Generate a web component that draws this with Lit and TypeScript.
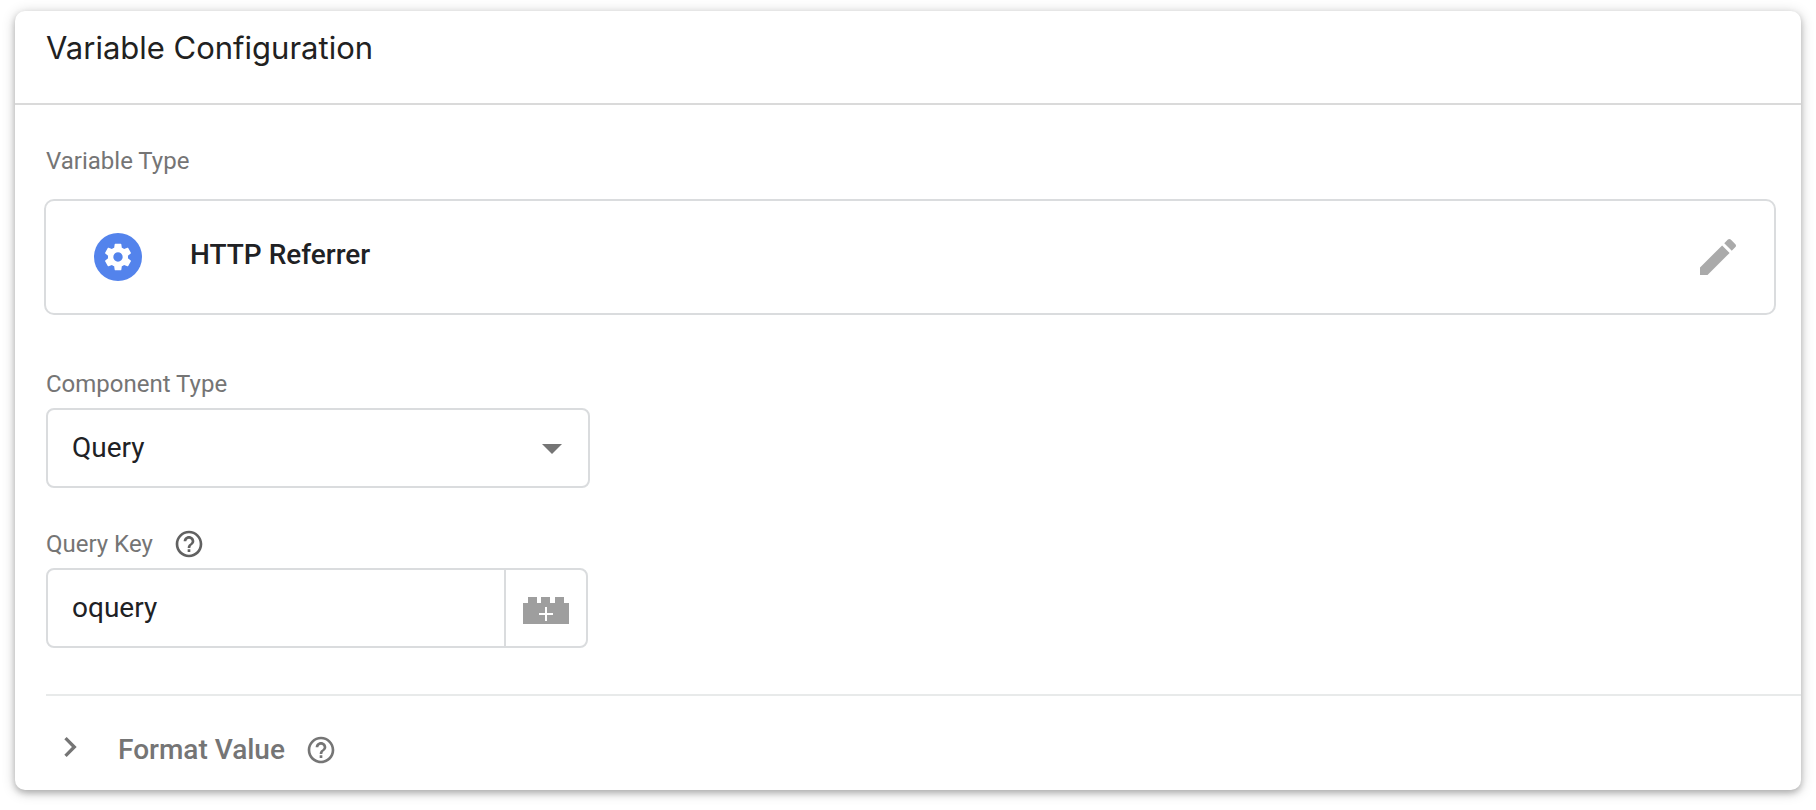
import { LitElement, html, css, svg } from "lit";
import { customElement, state } from "lit/decorators.js";

const helpIcon = svg`<svg class="help-icon" viewBox="0 0 24 24" aria-hidden="true"><path d="M11 18h2v-2h-2v2zm1-16C6.48 2 2 6.48 2 12s4.48 10 10 10 10-4.48 10-10S17.52 2 12 2zm0 18c-4.41 0-8-3.59-8-8s3.59-8 8-8 8 3.59 8 8-3.59 8-8 8zm0-14c-2.21 0-4 1.79-4 4h2c0-1.1.9-2 2-2s2 .9 2 2c0 2-3 1.75-3 5h2c0-2.25 3-2.5 3-5 0-2.21-1.79-4-4-4z"/></svg>`;

@customElement("app-root")
export class AppRoot extends LitElement {
  @state() private component = "Query";
  @state() private queryKey = "oquery";

  static styles = css`
    :host {
      display: block;
      padding: 11px 15px 19px;
      background: #fff;
      color: #202124;
      font-family: Roboto, sans-serif;
    }
    *,
    *::before,
    *::after {
      box-sizing: border-box;
    }
    svg {
      display: block;
      fill: currentColor;
      flex: none;
    }
    button {
      padding: 0;
      border: 0;
      background: none;
      font: inherit;
      color: inherit;
      cursor: pointer;
    }
    .card {
      background: #fff;
      border-radius: 10px;
      box-shadow: 0 3px 6px rgba(0, 0, 0, 0.22), 0 2px 14px rgba(0, 0, 0, 0.2);
    }
    .header {
      padding: 17px 31px 35px;
      border-bottom: 2px solid #dadada;
    }
    .title {
      margin: 0;
      font: 400 31px/40px Inter, sans-serif;
      color: #212121;
    }
    .body {
      display: flex;
      flex-direction: column;
      padding: 40px 0 46px 31px;
    }
    .label {
      font-size: 24px;
      line-height: 32px;
      color: #757575;
    }
    .type-box {
      display: flex;
      align-items: center;
      gap: 48px;
      margin: 22px 25px 0 -2px;
      padding: 32px 32px 32px 48px;
      border: 2px solid #dadcde;
      border-radius: 10px;
    }
    .badge {
      display: flex;
      align-items: center;
      justify-content: center;
      width: 48px;
      height: 48px;
      border-radius: 50%;
      background: #5383ec;
      color: #fff;
    }
    .badge svg {
      width: 32px;
      height: 32px;
    }
    .type-name {
      flex: 1;
      padding-bottom: 4px;
      font-size: 28px;
      font-weight: 500;
      line-height: 32px;
    }
    .edit {
      color: #aaa;
    }
    .edit svg,
    .select svg {
      width: 48px;
      height: 48px;
    }
    .field {
      display: flex;
      flex-direction: column;
      align-items: flex-start;
      gap: 8px;
    }
    .field-component {
      margin-top: 53px;
    }
    .field-key {
      margin-top: 40px;
    }
    .label-row {
      display: flex;
      align-items: center;
      gap: 20px;
    }
    .help {
      color: #616161;
    }
    .footer .help {
      color: #757575;
    }
    .help-icon {
      width: 32px;
      height: 32px;
    }
    .select {
      display: grid;
      align-items: center;
      width: 544px;
      max-width: 100%;
    }
    .select select,
    .select svg {
      grid-area: 1 / 1;
    }
    .select svg {
      justify-self: end;
      margin-right: 14px;
      color: #757575;
      pointer-events: none;
    }
    select,
    .key-input {
      appearance: none;
      margin: 0;
      padding: 0 24px;
      background: transparent;
      color: inherit;
      font: 400 28px/36px Roboto, sans-serif;
      outline: none;
    }
    select {
      width: 100%;
      height: 80px;
      border: 2px solid #dadcde;
      border-radius: 8px;
    }
    .key-group {
      display: flex;
      width: 542px;
      max-width: 100%;
      height: 80px;
      border: 2px solid #dadcde;
      border-radius: 8px;
    }
    .key-input {
      flex: 1;
      min-width: 0;
      border: 0;
    }
    .brick {
      display: flex;
      align-items: center;
      justify-content: center;
      width: 82px;
      padding-top: 4px;
      border-left: 2px solid #dadcde;
      color: #9e9e9e;
    }
    .brick svg {
      width: 46px;
      height: 27px;
    }
    .footer {
      margin-left: 31px;
      border-top: 2px solid #e8eaea;
      display: flex;
      align-items: center;
      gap: 20px;
      padding: 36px 0 22px 4px;
      color: #757575;
    }
    .toggle {
      display: flex;
      align-items: flex-start;
      gap: 28px;
      font-size: 28px;
      font-weight: 500;
      line-height: 36px;
    }
    .toggle svg {
      width: 40px;
      height: 30px;
    }
  `;

  render() {
    return html`
      <section class="card" aria-labelledby="title">
        <header class="header">
          <h1 class="title" id="title">Variable Configuration</h1>
        </header>
        <div class="body">
          <div class="label">Variable Type</div>
          <div class="type-box">
            <span class="badge">
              <svg viewBox="0 0 24 24" aria-hidden="true">
                <path d="M19.43 12.98c.04-.32.07-.64.07-.98s-.03-.66-.07-.98l2.11-1.65c.19-.15.24-.42.12-.64l-2-3.46c-.12-.22-.39-.3-.61-.22l-2.49 1c-.52-.4-1.08-.73-1.69-.98l-.38-2.65C14.46 2.18 14.25 2 14 2h-4c-.25 0-.46.18-.49.42l-.38 2.65c-.61.25-1.17.59-1.69.98l-2.49-1c-.23-.09-.49 0-.61.22l-2 3.46c-.13.22-.07.49.12.64l2.11 1.65c-.04.32-.07.65-.07.98s.03.66.07.98l-2.11 1.65c-.19.15-.24.42-.12.64l2 3.46c.12.22.39.3.61.22l2.49-1c.52.4 1.08.73 1.69.98l.38 2.65c.03.24.24.42.49.42h4c.25 0 .46-.18.49-.42l.38-2.65c.61-.25 1.17-.59 1.69-.98l2.49 1c.23.09.49 0 .61-.22l2-3.46c.12-.22.07-.49-.12-.64l-2.11-1.65zM12 15.5c-1.93 0-3.5-1.57-3.5-3.5s1.57-3.5 3.5-3.5 3.5 1.57 3.5 3.5-1.57 3.5-3.5 3.5z"/>
              </svg>
            </span>
            <span class="type-name">HTTP Referrer</span>
            <button class="edit" aria-label="Edit">
              <svg viewBox="0 0 24 24" aria-hidden="true">
                <path d="M3 17.25V21h3.75L17.81 9.94l-3.75-3.75L3 17.25zM20.71 7.04c.39-.39.39-1.02 0-1.41l-2.34-2.34c-.39-.39-1.02-.39-1.41 0l-1.83 1.83 3.75 3.75 1.83-1.83z"/>
              </svg>
            </button>
          </div>

          <div class="field field-component">
            <label class="label" for="component">Component Type</label>
            <div class="select">
              <select
                id="component"
                .value=${this.component}
                @change=${(e: Event) => (this.component = (e.target as HTMLSelectElement).value)}
              >
                <option>Query</option>
              </select>
              <svg viewBox="0 0 24 24" aria-hidden="true"><path d="M7 10l5 5 5-5z" /></svg>
            </div>
          </div>

          <div class="field field-key">
            <div class="label-row">
              <label class="label" for="key">Query Key</label>
              <button class="help" aria-label="Help">${helpIcon}</button>
            </div>
            <div class="key-group">
              <input
                class="key-input"
                id="key"
                type="text"
                .value=${this.queryKey}
                @input=${(e: Event) => (this.queryKey = (e.target as HTMLInputElement).value)}
              />
              <button class="brick" aria-label="Insert variable">
                <svg viewBox="0 0 46 27" aria-hidden="true">
                  <path d="M0 6H5V0H14V6H18V0H27V6H32V0H41V6H46V27H0z" />
                  <path d="M22 10h2v6h6v2h-6v6h-2v-6h-6v-2h6z" fill="#fff" />
                </svg>
              </button>
            </div>
          </div>
        </div>
        <div class="footer">
          <button class="toggle" aria-expanded="false">
            <svg viewBox="0 0 24 18" aria-hidden="true">
              <path d="M8.59 13.59L13.17 9 8.59 4.41 10 3l6 6-6 6-1.41-1.41z" />
            </svg>
            <span>Format Value</span>
          </button>
          <button class="help" aria-label="Help">${helpIcon}</button>
        </div>
      </section>
    `;
  }
}
